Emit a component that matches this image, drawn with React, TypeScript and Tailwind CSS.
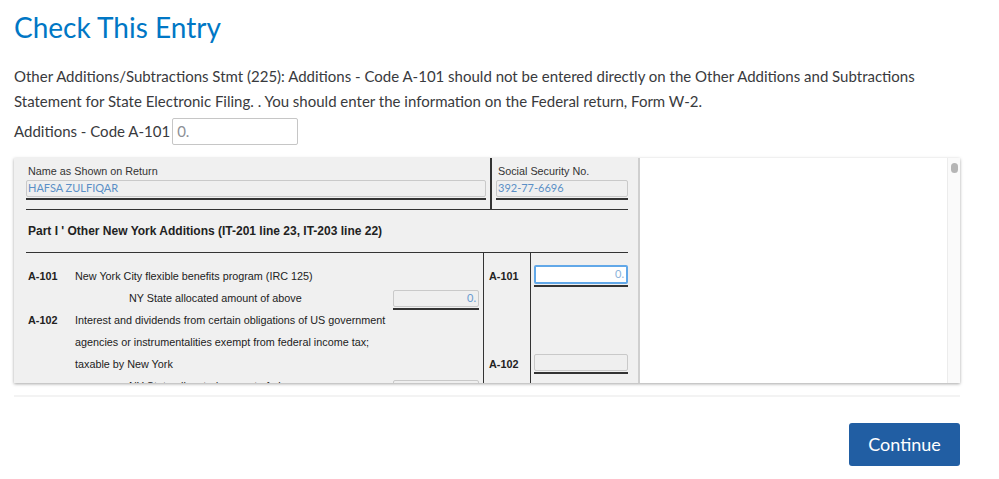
import React from "react";

const sans = "font-['Lato','Open_Sans',sans-serif]";
const form = "font-['Liberation_Sans',Arial,sans-serif]";

function Row({
  left,
  mid,
  right,
  h = "h-[22px]",
}: {
  left?: React.ReactNode;
  mid?: React.ReactNode;
  right?: React.ReactNode;
  h?: string;
}) {
  return (
    <div className={`flex ${h}`}>
      <div className="flex w-[458px] shrink-0 items-center border-r border-[#333]">{left}</div>
      <div className="flex w-[47px] shrink-0 items-center border-r border-[#333] pl-[5px] font-bold text-[#222]">
        {mid}
      </div>
      <div className="flex flex-1 items-center pl-[3px]">{right}</div>
    </div>
  );
}

function Field({ value, className = "" }: { value?: string; className?: string }) {
  return (
    <div className={`border-b-2 border-[#333] pb-[1px] ${className}`}>
      <div className="flex h-[17px] items-center justify-end rounded-[2px] border border-[#c9c9c9] bg-[#efefef] px-[2px] text-[11px] text-[#6a9bd0]">
        <span className={sans}>{value}</span>
      </div>
    </div>
  );
}

export default function App() {
  return (
    <div className={`min-h-[479px] w-[999px] bg-white text-[#393a3d] ${sans}`}>
      <div className="w-[960px] pl-[14px]">
        <h1 className="pt-[8px] text-[28px] leading-[38px] text-[#0077c5]">Check This Entry</h1>
        <p className="mt-[18px] text-[15px] leading-[25px]">
          Other Additions/Subtractions Stmt (225): Additions - Code A-101 should not be entered directly on the Other
          Additions and Subtractions Statement for State Electronic Filing. . You should enter the information on the
          Federal return, Form W-2.
        </p>
        <div className="mt-[4px] flex items-center gap-[2px] text-[15px]">
          <span>Additions - Code A-101</span>
          <div className="flex h-[27px] w-[126px] items-center rounded-[2px] border border-[#c6c6c6] px-[4px] text-[15px] text-[#8d9096]">
            0.
          </div>
        </div>

        <div className="mt-[13px] flex h-[225px] overflow-hidden shadow-[0_1px_3px_rgba(0,0,0,0.35)]">
          <div className={`w-[626px] shrink-0 border-r-2 border-[#cfcfcf] bg-[#f0f0f0] pl-[12px] ${form}`}>
            <div className="w-[602px]">
              <div className="flex h-[52px] border-b border-[#333]">
                <div className="w-[466px] border-r-2 border-[#333] pr-[4px]">
                  <div className="pl-[2px] pt-[6px] text-[10.8px] leading-[14px] text-[#333]">Name as Shown on Return</div>
                  <div className="mt-[2px] border-b-2 border-[#333] pb-[1px]">
                    <div className="flex h-[17px] items-center rounded-[2px] border border-[#c9c9c9] bg-[#efefef] px-[1px] text-[11px] text-[#5b8fc6]">
                      <span className={sans}>HAFSA ZULFIQAR</span>
                    </div>
                  </div>
                </div>
                <div className="flex-1 pl-[4px]">
                  <div className="pl-[2px] pt-[6px] text-[10.8px] leading-[14px] text-[#333]">Social Security No.</div>
                  <div className="mt-[2px] border-b-2 border-[#333] pb-[1px]">
                    <div className="flex h-[17px] items-center rounded-[2px] border border-[#c9c9c9] bg-[#efefef] px-[1px] text-[11px] text-[#5b8fc6]">
                      <span className={sans}>392-77-6696</span>
                    </div>
                  </div>
                </div>
              </div>
              <div className="flex h-[43px] items-center border-b border-[#333] pl-[2px] text-[12px] font-bold text-[#222]">
                Part I ' Other New York Additions (IT-201 line 23, IT-203 line 22)
              </div>
              <div className="text-[10.8px] text-[#222]">
                <Row h="h-[12px]" />
                <Row
                  left={
                    <>
                      <span className="w-[49px] pl-[2px] font-bold">A-101</span>
                      <span>New York City flexible benefits program (IRC 125)</span>
                    </>
                  }
                  mid="A-101"
                  right={
                    <div className="w-full border-b-2 border-[#333] pb-[1px]">
                      <div className="flex h-[19px] items-center justify-end rounded-[2px] border-2 border-[#62a8e8] bg-white px-[2px] text-[11px] text-[#8ab2da]">
                        <span className={sans}>0.</span>
                      </div>
                    </div>
                  }
                />
                <Row
                  left={
                    <>
                      <span className="pl-[103px]">NY State allocated amount of above</span>
                      <Field value="0." className="ml-auto mr-[4px] mt-[4px] w-[86px]" />
                    </>
                  }
                />
                <Row
                  left={
                    <>
                      <span className="w-[49px] pl-[2px] font-bold">A-102</span>
                      <span>Interest and dividends from certain obligations of US government</span>
                    </>
                  }
                />
                <Row left={<span className="pl-[49px]">agencies or instrumentalities exempt from federal income tax;</span>} />
                <Row
                  left={<span className="pl-[49px]">taxable by New York</span>}
                  mid="A-102"
                  right={<Field className="w-full" />}
                />
                <Row
                  left={
                    <>
                      <span className="pl-[103px]">NY State allocated amount of above</span>
                      <Field className="ml-auto mr-[4px] mt-[8px] w-[86px]" />
                    </>
                  }
                />
              </div>
            </div>
          </div>
          <div className="flex flex-1 justify-end bg-white">
            <div className="flex w-[13px] justify-center border-l border-[#ececec] bg-[#fafafa] pt-[5px]">
              <div className="h-[10px] w-[7px] rounded-full bg-[#b5b5b5]" />
            </div>
          </div>
        </div>

        <div className="mt-[12px] h-[2px] bg-[#f3f3f3]" />

        <div className="mt-[26px] flex justify-end">
          <button className="h-[43px] w-[111px] rounded-[3px] bg-[#215ea3] text-[18px] text-white">Continue</button>
        </div>
      </div>
    </div>
  );
}
